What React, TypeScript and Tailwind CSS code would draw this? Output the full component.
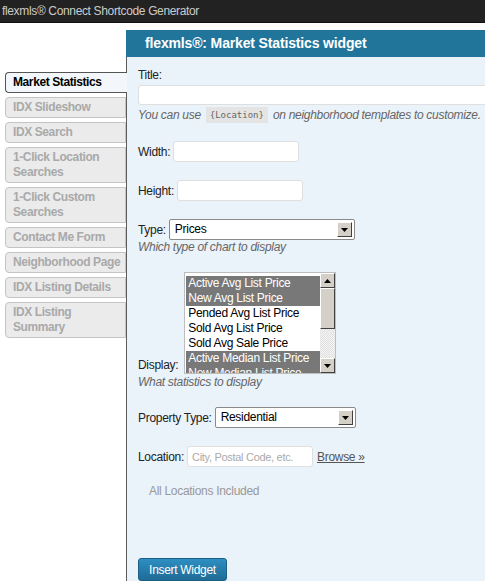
import type { ReactNode } from "react";

const tabs = [
  ["Market Statistics"],
  ["IDX Slideshow"],
  ["IDX Search"],
  ["1-Click Location", "Searches"],
  ["1-Click Custom", "Searches"],
  ["Contact Me Form"],
  ["Neighborhood Page"],
  ["IDX Listing Details"],
  ["IDX Listing", "Summary"],
];

const stats = [
  { label: "Active Avg List Price", selected: true },
  { label: "New Avg List Price", selected: true },
  { label: "Pended Avg List Price", selected: false },
  { label: "Sold Avg List Price", selected: false },
  { label: "Sold Avg Sale Price", selected: false },
  { label: "Active Median List Price", selected: true },
  { label: "New Median List Price", selected: true },
];

function Arrow({ up = false }: { up?: boolean }) {
  return (
    <svg width="7" height="4" viewBox="0 0 7 4">
      <polygon points={up ? "0,4 7,4 3.5,0" : "0,0 7,0 3.5,4"} fill="#000" />
    </svg>
  );
}

// classic win-style 3D button
function BevelButton({ children, className = "" }: { children?: ReactNode; className?: string }) {
  return (
    <div
      className={`flex items-center justify-center bg-[#d4d0c8] border border-t-[#fff] border-l-[#fff] border-r-[#404040] border-b-[#404040] ${className}`}
    >
      {children}
    </div>
  );
}

function Select({ value, width }: { value: string; width: string }) {
  return (
    <div
      className={`flex h-[21px] items-center justify-between rounded-[2px] border border-[#8a8a8a] bg-white pl-[5px] pr-[2px] ${width}`}
    >
      <span className="text-[12px] leading-[15px] text-black">{value}</span>
      <BevelButton className="h-[15px] w-[15px]">
        <Arrow />
      </BevelButton>
    </div>
  );
}

function TextInput({ width, placeholder }: { width: string; placeholder?: string }) {
  return (
    <div
      className={`flex h-[21px] items-center whitespace-nowrap rounded-[3px] border border-[#dfdfdf] bg-white px-[4px] text-[11px] text-[#aaa] ${width}`}
    >
      {placeholder}
    </div>
  );
}

export default function App() {
  return (
    <div className="h-[581px] w-[485px] overflow-hidden bg-white font-['Liberation_Sans',Arial,sans-serif] tracking-[-0.3px]">
      {/* Top bar */}
      <div className="flex h-[23px] items-center border-b border-[#111] bg-[#222] pl-[2px] text-[12px] tracking-[-0.35px] text-[#ccc]">
        flexmls® Connect Shortcode Generator
      </div>

      <div className="mt-[7px] flex h-[551px]">
        {/* Tabs */}
        <div className="flex w-[126px] shrink-0 flex-col gap-[4px] pl-[5px] pt-[42px]">
          {tabs.map((lines, i) => (
            <div
              key={lines.join(" ")}
              className={`whitespace-nowrap rounded-l-[4px] border py-[2px] pl-[7px] text-[12px] font-bold leading-[15px] tracking-[-0.4px] ${
                i === 0
                  ? "relative z-10 -mr-px border-r-0 border-[#555] bg-[#f3f7fb] text-black"
                  : "border-[#c4c4c4] bg-[#ebebeb] text-[#a9a9a9]"
              }`}
            >
              {lines.map((l) => (
                <div key={l}>{l}</div>
              ))}
            </div>
          ))}
        </div>

        {/* Panel */}
        <div className="flex w-[420px] shrink-0 flex-col">
          <div className="flex h-[30px] items-center bg-[#21759b] pl-[19px] text-[14px] font-bold tracking-[-0.15px] text-white">
            flexmls®: Market Statistics widget
          </div>
          <div className="flex-1 border-l border-[#5c5c5c] bg-[#eaf2fa] pl-[11px] pt-[11px] text-[12px] leading-[14px] text-[#222]">
            <div>Title:</div>
            <div className="mt-[3px] h-[20px] w-[400px] rounded-[3px] border border-[#dfdfdf] bg-white" />
            <div className="mt-[2px] flex items-center whitespace-nowrap italic text-[#666]">
              You can use
              <code className="mx-[5px] bg-[#e4e4e4] px-[4px] py-[1px] font-['DejaVu_Sans_Mono',monospace] text-[9px] not-italic tracking-normal text-[#666]">
                {"{Location}"}
              </code>
              on neighborhood templates to customize.
            </div>

            <div className="mt-[18px] flex items-center gap-[3px]">
              <span>Width:</span>
              <TextInput width="w-[126px]" />
            </div>
            <div className="mt-[18px] flex items-center gap-[3px]">
              <span>Height:</span>
              <TextInput width="w-[126px]" />
            </div>

            <div className="mt-[18px] flex items-center gap-[3px]">
              <span>Type:</span>
              <Select value="Prices" width="w-[186px]" />
            </div>
            <div className="mt-[0px] italic text-[#666]">Which type of chart to display</div>

            <div className="mt-[18px] flex items-end gap-[6px]">
              <span className="pb-[2px]">Display:</span>
              <div className="flex h-[102px] w-[152px] border border-[#bdbdbd] bg-white">
                <div className="flex-1 overflow-hidden pl-px pt-[3px]">
                  {stats.map((s) => (
                    <div
                      key={s.label}
                      className={`h-[15px] whitespace-nowrap pl-[2px] text-[12px] leading-[15px] ${
                        s.selected ? "bg-[#787878] text-white" : "text-black"
                      }`}
                    >
                      {s.label}
                    </div>
                  ))}
                </div>
                <div className="flex w-[15px] flex-col">
                  <BevelButton className="h-[15px]">
                    <Arrow up />
                  </BevelButton>
                  <BevelButton className="h-[41px]" />
                  <div className="flex-1 bg-[repeating-conic-gradient(#e0e0e0_0%_25%,#f4f4f4_0%_50%)] bg-[length:2px_2px]" />
                  <BevelButton className="h-[15px]">
                    <Arrow />
                  </BevelButton>
                </div>
              </div>
            </div>
            <div className="mt-[1px] italic text-[#666]">What statistics to display</div>

            <div className="mt-[18px] flex items-center gap-[3px]">
              <span>Property Type:</span>
              <Select value="Residential" width="w-[141px]" />
            </div>

            <div className="mt-[18px] flex items-center gap-[3px]">
              <span>Location:</span>
              <TextInput width="w-[126px]" placeholder="City, Postal Code, etc." />
              <span className="ml-[1px] text-[#555] underline">Browse »</span>
            </div>

            <div className="ml-[11px] mt-[17px] text-[#999]">All Locations Included</div>

            <button className="mt-[60px] h-[23px] w-[89px] rounded-[3px] border border-[#1b5f85] bg-gradient-to-b from-[#2e8fc2] to-[#1f6b96] text-[12px] text-white">
              Insert Widget
            </button>
          </div>
        </div>
      </div>
    </div>
  );
}
